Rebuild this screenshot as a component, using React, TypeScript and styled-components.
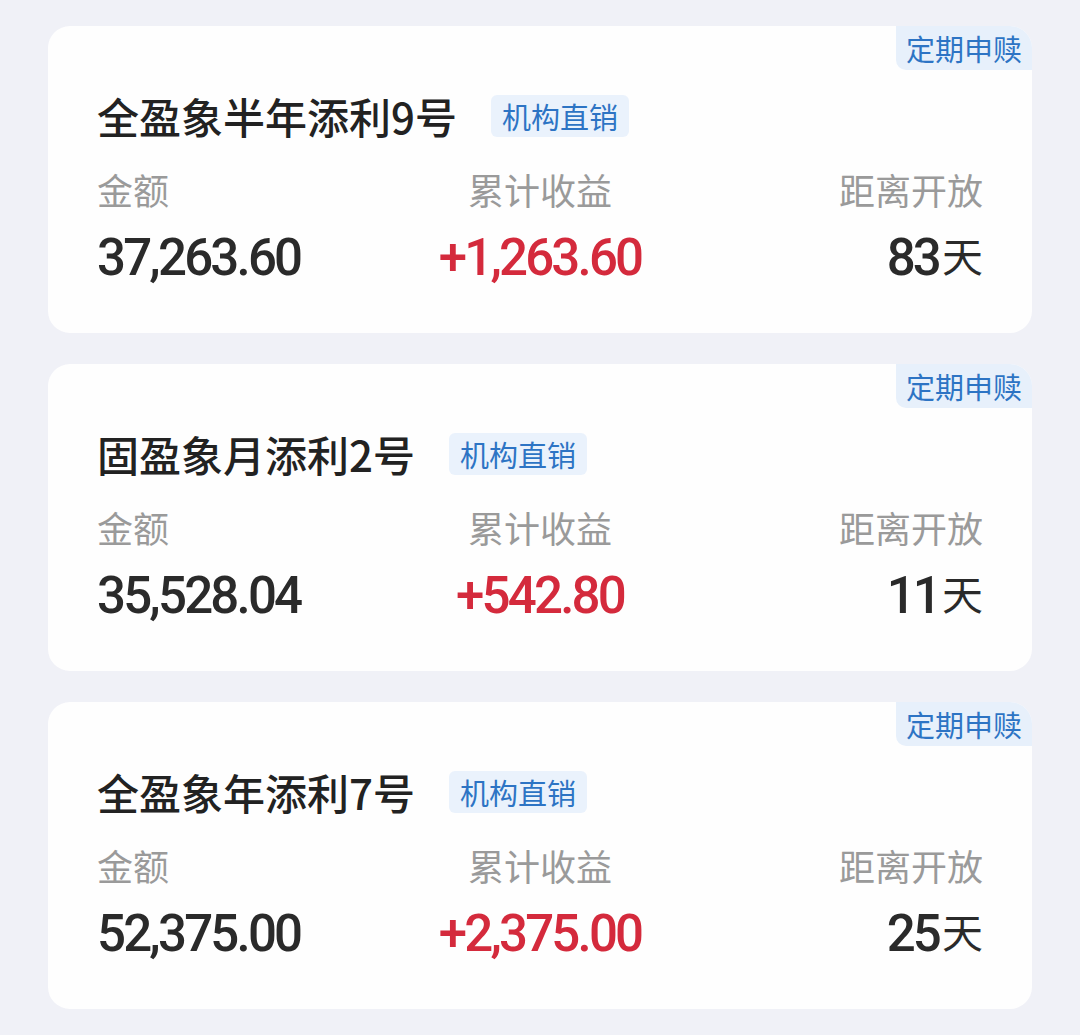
import React from "react";
import styled, { createGlobalStyle } from "styled-components";

const GlobalStyle = createGlobalStyle`
  body {
    margin: 0;
    background: #f0f1f7;
    font-family: "Noto Sans CJK SC", "Noto Sans", sans-serif;
  }
`;

const Page = styled.div`
  display: flex;
  flex-direction: column;
  gap: 31px;
  padding: 26px 48px 26px 48px;
`;

const Card = styled.div`
  position: relative;
  background: #fefefe;
  border-radius: 22px;
  padding: 62px 49px 45px;
`;

const Tag = styled.div`
  position: absolute;
  top: 0;
  right: 0;
  height: 44px;
  padding: 0 10px;
  line-height: 44px;
  font-size: 29px;
  color: #2d74c4;
  background: #e7f0fb;
  border-radius: 0 22px 0 10px;
`;

const Header = styled.div`
  display: flex;
  align-items: center;
  height: 56px;
`;

const Title = styled.h2`
  margin: 0;
  font-size: 42px;
  line-height: 56px;
  font-weight: 500;
  color: #222;
`;

const Badge = styled.span`
  margin-left: 34px;
  height: 42px;
  padding: 0 11px;
  line-height: 42px;
  font-size: 29px;
  color: #2d74c4;
  background: #eaf2fc;
  border-radius: 6px;
`;

const Stats = styled.div`
  display: grid;
  grid-template-columns: repeat(3, 1fr);
  margin-top: 23px;
`;

const Stat = styled.div<{ $align: "left" | "center" | "right" }>`
  display: flex;
  flex-direction: column;
  gap: 17px;
  text-align: ${(p) => p.$align};
`;

const Label = styled.div`
  font-size: 36px;
  line-height: 44px;
  color: #9a9a9a;
`;

const Value = styled.div<{ $red?: boolean }>`
  height: 60px;
  font-family: Roboto, "Noto Sans CJK SC", sans-serif;
  font-size: 51px;
  font-weight: 500;
  line-height: 60px;
  letter-spacing: -2.8px;
  color: ${(p) => (p.$red ? "#d42a3c" : "#2a2a2a")};
`;

const Unit = styled.span`
  font-family: "Noto Sans CJK SC", sans-serif;
  font-size: 41px;
  font-weight: 400;
  line-height: 1;
  letter-spacing: 0;
  margin-left: 3px;
  vertical-align: 3px;
`;

type Product = {
  name: string;
  amount: string;
  profit: string;
  days: number;
};

const products: Product[] = [
  { name: "全盈象半年添利9号", amount: "37,263.60", profit: "+1,263.60", days: 83 },
  { name: "固盈象月添利2号", amount: "35,528.04", profit: "+542.80", days: 11 },
  { name: "全盈象年添利7号", amount: "52,375.00", profit: "+2,375.00", days: 25 },
];

const ProductCard = ({ name, amount, profit, days }: Product) => (
  <Card>
    <Tag>定期申赎</Tag>
    <Header>
      <Title>{name}</Title>
      <Badge>机构直销</Badge>
    </Header>
    <Stats>
      <Stat $align="left">
        <Label>金额</Label>
        <Value>{amount}</Value>
      </Stat>
      <Stat $align="center">
        <Label>累计收益</Label>
        <Value $red>{profit}</Value>
      </Stat>
      <Stat $align="right">
        <Label>距离开放</Label>
        <Value>
          {days}
          <Unit>天</Unit>
        </Value>
      </Stat>
    </Stats>
  </Card>
);

const App = () => (
  <>
    <GlobalStyle />
    <Page>
      {products.map((p) => (
        <ProductCard key={p.name} {...p} />
      ))}
    </Page>
  </>
);

export default App;
